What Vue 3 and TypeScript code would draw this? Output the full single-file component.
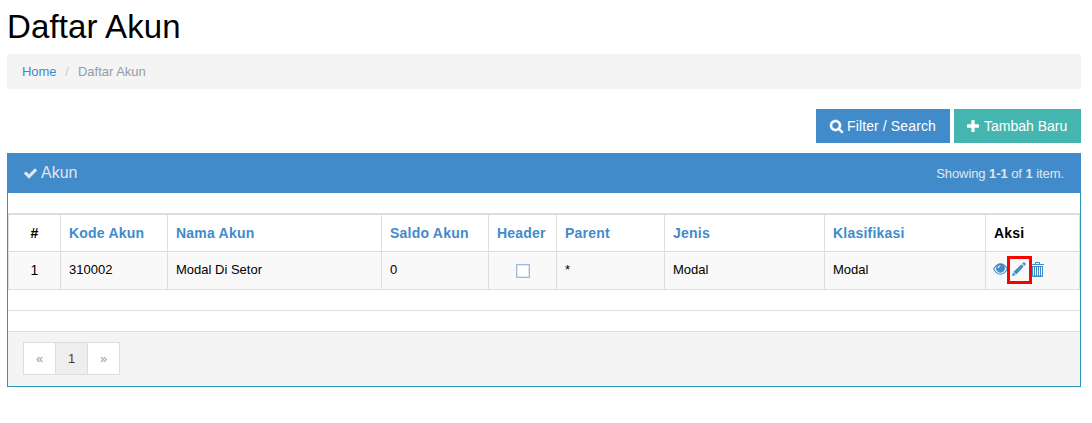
<script setup lang="ts">
interface Column { label: string; width: number; sortable: boolean }

const columns: Column[] = [
  { label: '#', width: 53, sortable: false },
  { label: 'Kode Akun', width: 107, sortable: true },
  { label: 'Nama Akun', width: 214, sortable: true },
  { label: 'Saldo Akun', width: 107, sortable: true },
  { label: 'Header', width: 68, sortable: true },
  { label: 'Parent', width: 108, sortable: true },
  { label: 'Jenis', width: 160, sortable: true },
  { label: 'Klasifikasi', width: 161, sortable: true },
  { label: 'Aksi', width: 94, sortable: false },
]

const rows = [
  { code: '310002', name: 'Modal Di Setor', balance: '0', header: false, parent: '*', kind: 'Modal', group: 'Modal' },
]
</script>

<template>
  <main class="page">
    <h1>Daftar Akun</h1>
    <nav class="breadcrumb">
      <a>Home</a><span class="slash">/</span><span>Daftar Akun</span>
    </nav>
    <div class="toolbar">
      <button class="btn blue">
        <svg class="search" viewBox="64 128 1664 1664"><path d="M1216 832q0-185-131.5-316.5t-316.5-131.5-316.5 131.5-131.5 316.5 131.5 316.5 316.5 131.5 316.5-131.5 131.5-316.5zm512 832q0 52-38 90t-90 38q-54 0-90-38l-343-342q-179 124-399 124-143 0-273.5-55.5t-225-150-150-225-55.5-273.5 55.5-273.500 150-225 225-150 273.5-55.5 273.5 55.5 225 150 150 225 55.5 273.5q0 220-124 399l343 343q37 37 37 90z" /></svg>
        <span class="filter-label">Filter / Search</span>
      </button>
      <button class="btn teal">
        <svg class="plus" viewBox="192 128 1408 1408"><path d="M1600 736v192q0 40-28 68t-68 28h-416v416q0 40-28 68t-68 28h-192q-40 0-68-28t-28-68v-416h-416q-40 0-68-28t-28-68v-192q0-40 28-68t68-28h416v-416q0-40 28-68t68-28h192q40 0 68 28t28 68v416h416q40 0 68 28t28 68z" /></svg>
        <span>Tambah Baru</span>
      </button>
    </div>
    <section class="panel">
      <header class="panel-head">
        <svg class="check" viewBox="121 334 1550 1188"><path d="M1671 566q0 40-28 68l-724 724-136 136q-28 28-68 28t-68-28l-136-136-362-362q-28-28-28-68t28-68l136-136q28-28 68-28t68 28l294 295 656-657q28-28 68-28t68 28l136 136q28 28 28 68z" /></svg>
        <span class="title">Akun</span>
        <span class="summary">Showing <b>1-1</b> of <b>1</b> item.</span>
      </header>
      <table>
        <colgroup>
          <col v-for="c in columns" :key="c.label" :style="{ width: c.width + 'px' }">
        </colgroup>
        <thead>
          <tr>
            <th v-for="c in columns" :key="c.label" :class="{ sortable: c.sortable }">{{ c.label }}</th>
          </tr>
        </thead>
        <tbody>
          <tr v-for="(r, i) in rows" :key="r.code">
            <td class="index">{{ i + 1 }}</td>
            <td>{{ r.code }}</td>
            <td>{{ r.name }}</td>
            <td>{{ r.balance }}</td>
            <td><span class="box" role="checkbox" :aria-checked="r.header" /></td>
            <td>{{ r.parent }}</td>
            <td>{{ r.kind }}</td>
            <td>{{ r.group }}</td>
            <td>
              <div class="actions">
                <svg class="eye" viewBox="0 0 15 12"><path fill-rule="evenodd" d="M0 6Q3.200.3 7.500.3T15 6Q11.800 11.700 7.500 11.700T0 6zM1.300 6Q4 10.700 7.500 10.700T13.700 6Q12.500 3.900 10.900 2.700A4.300 4.300 0 1 1 4.100 2.700Q2.500 3.900 1.300 6zM7.200 2.300Q4.800 2.500 4.600 5L5.700 5.200Q5.900 3.500 7.400 3.300z" /></svg>
                <span class="pencil-wrap">
                  <svg class="pencil" viewBox="0 0 14 14"><path d="M0 14l1-3.700 2.700 2.700zM1.600 9.700L9.500 2.300l2.200 2.200L4.300 12.400zM10.200 1.600L11.300.5q.6-.6 1.200 0l1 1q.6.600 0 1.200l-1.100 1.100z" /></svg>
                </span>
                <svg class="trash" viewBox="0 0 13 15"><path fill-rule="evenodd" d="M0 2h4V.8Q4 0 4.800 0h3.400Q9 0 9 .8V2h4v1H0zM5 1v1h3V1zM1 4h11v10q0 1-1 1H2q-1 0-1-1zM2 5v8.500h1V5zM4 5v8.500h1V5zM6 5v8.500h1V5zM8 5v8.500h1V5zM10 5v8.500h1V5z" /></svg>
              </div>
            </td>
          </tr>
        </tbody>
      </table>
      <div class="spacer" />
      <footer>
        <div class="pager">
          <span>«</span><span class="current">1</span><span>»</span>
        </div>
      </footer>
    </section>
  </main>
</template>

<style>
body { margin: 0; background: #fff; }
</style>

<style scoped>
*, *::before { box-sizing: border-box; }
.page {
  width: 1081px;
  padding: 0 0 0 7px;
  font: 13px/18px "Liberation Sans", Arial, sans-serif;
  color: #000;
}
h1 { margin: 0; height: 54px; padding-top: 8px; font-size: 33px; line-height: 38px; font-weight: 400; letter-spacing: .12px; }
.breadcrumb { display: flex; height: 35px; align-items: center; padding-left: 15px; background: #f4f4f4; color: #969ba5; }
.breadcrumb a { color: #428bca; letter-spacing: -.1px; }
.slash { margin: 0 9px; color: #ccc; }
.toolbar { display: flex; justify-content: flex-end; gap: 4px; margin: 20px 0 10px; }
.btn { display: flex; align-items: center; height: 34px; padding: 0 14px; border: 0; font: 14px/20px "Liberation Sans", Arial, sans-serif; color: #fff; white-space: nowrap; }
.blue { width: 134px; background: #428bca; }
.teal { width: 127px; padding-left: 13px; background: #45b6af; }
.filter-label { letter-spacing: .12px; }
svg { display: block; flex: none; fill: currentColor; }
.search { width: 13px; height: 13px; margin-right: 4px; stroke: currentColor; stroke-width: 70px; overflow: visible; }
.plus { width: 12px; height: 12px; margin: 0 5px 0 0; }
.panel { border: 1px solid #2f96b9; border-top: 0; height: 234px; }
.panel-head { display: flex; align-items: center; height: 40px; margin: 0 -1px; padding: 0 17px 0 17px; background: #428bca; color: #e2e6ea; }
.check { width: 13px; height: 11px; margin: 1px 4px 0 0; }
.title { font-size: 16px; margin-top: -1px; }
.summary { margin-left: auto; padding-top: 1px; letter-spacing: -.07px; }
table { width: 1072px; margin-top: 20px; table-layout: fixed; border-collapse: separate; border-spacing: 0; border-top: 2px solid #ddd; }
th, td { padding: 0 8px; border-right: 1px solid #ddd; border-bottom: 1px solid #ddd; text-align: left; white-space: nowrap; }
th:first-child, td:first-child { border-left: 1px solid #ddd; text-align: center; }
th { height: 37px; font-size: 14px; letter-spacing: .22px; }
.sortable { color: #428bca; }
td { height: 38px; padding-bottom: 2px; background: #f9f9f9; }
td.index { font-size: 14px; padding-bottom: 1px; }
.box { display: block; width: 14px; height: 14px; margin: 3px auto 0; border: 1px solid #9cb9da; outline: 1px solid #dfe9f4; outline-offset: -2px; background: #fff; }
.actions { display: flex; align-items: center; margin: -1px 0 0 -1px; color: #428bca; }
.eye { width: 15px; height: 12px; margin-right: -1px; }
.pencil-wrap { position: relative; width: 14px; height: 14px; margin: 0 5px 0 5px; }
.pencil-wrap::before { content: ""; position: absolute; left: -5px; top: -6px; width: 25px; height: 28px; border: 3px solid #f00; }
.pencil { width: 14px; height: 14px; }
.trash { width: 13px; height: 15px; }
.spacer { height: 42px; border-bottom: 1px solid #ddd; background: linear-gradient(#ddd, #ddd) 0 20px / 100% 1px no-repeat; }
footer { height: 54px; padding: 10px 15px; background: #f4f4f4; }
.pager { display: flex; width: 97px; height: 33px; border: 1px solid #ddd; background: #fff; }
.pager span { width: 32px; border-right: 1px solid #ddd; text-align: center; line-height: 31px; color: #8b9bb0; }
.pager span:last-child { border-right: 0; width: 31px; }
.pager .current { background: #eee; color: #533; }
</style>
